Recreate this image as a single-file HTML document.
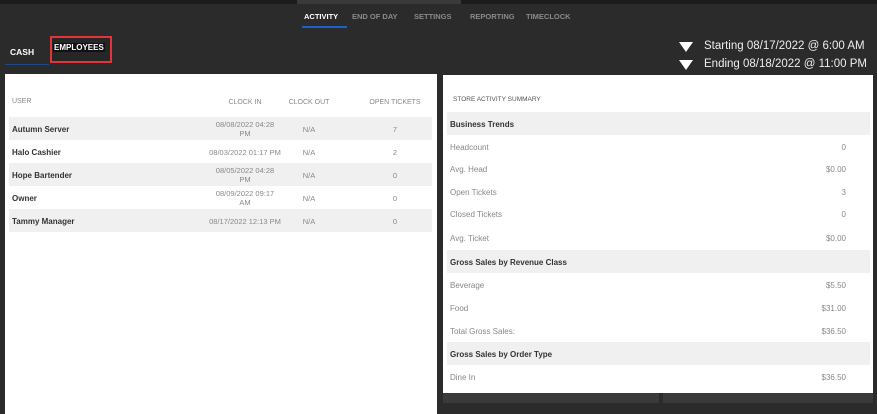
<!DOCTYPE html>
<html><head><style>
*{margin:0;padding:0;box-sizing:border-box}
body{width:877px;height:403px;background:#2b2b2b;font-family:"Liberation Sans",sans-serif;position:relative;overflow:hidden}
.a{position:absolute}
.nav{top:12px;font-size:7.5px;font-weight:bold;color:#8a8a8a;letter-spacing:0}
.lp{left:5px;top:74px;width:432px;height:340px;background:#fff}
.rp{left:443px;top:75px;width:430px;height:318px;background:#fff}
.row{position:absolute;left:0;width:100%;height:23px;font-size:8px;color:#888}
.g{background:#f0f0f0}
.row span{position:absolute;top:8px}
.b{font-weight:bold;color:#333}
.c{text-align:center;width:80px;margin-left:-40px;line-height:9px;font-size:7.5px}
</style></head><body>
<div class="a" style="left:0;top:0;width:877px;height:4px;background:#1c1c1c"></div>
<div class="a" style="left:297px;top:0;width:164px;height:4px;background:#3a3a3a"></div>
<div class="a nav" style="left:304px;color:#fff">ACTIVITY</div>
<div class="a" style="left:302px;top:26px;width:45px;height:2px;background:#1f5fc8"></div>
<div class="a nav" style="left:352px">END OF DAY</div>
<div class="a nav" style="left:414px">SETTINGS</div>
<div class="a nav" style="left:470px">REPORTING</div>
<div class="a nav" style="left:526px">TIMECLOCK</div>
<div class="a" style="left:10px;top:47px;font-size:8.5px;font-weight:bold;color:#fff">CASH</div>
<div class="a" style="left:5px;top:64px;width:44px;height:1px;background:#1f4a8a"></div>
<div class="a" style="left:50px;top:36px;width:62px;height:27px;border:2px solid #e3343c;background:#262626"></div>
<div class="a" style="left:53px;top:43px;font-size:8px;font-weight:bold;color:#fff;background:#111;padding:0 1px">EMPLOYEES</div>
<svg class="a" style="left:679px;top:42px" width="14" height="32"><polygon points="0,0 14,0 7,10" fill="#fff"/><polygon points="0,18 14,18 7,28" fill="#fff"/></svg>
<div class="a" style="left:704px;top:40px;font-size:11.5px;color:#eee">Starting 08/17/2022 @ 6:00 AM</div>
<div class="a" style="left:704px;top:58px;font-size:11.5px;color:#eee">Ending 08/18/2022 @ 11:00 PM</div>

<div class="a lp">
<div class="row" style="top:16px"><span style="left:7px;font-size:7px">USER</span><span class="c" style="left:240px;font-size:7px">CLOCK IN</span><span class="c" style="left:304px;font-size:7px">CLOCK OUT</span><span class="c" style="left:390px;font-size:7px">OPEN TICKETS</span></div>
<div class="row g" style="top:43px;left:4px;width:423px"><span class="b" style="left:3px">Autumn Server</span><span class="c" style="left:236px;top:3px">08/08/2022 04:28<br>PM</span><span class="c" style="left:300px">N/A</span><span class="c" style="left:386px">7</span></div>
<div class="row" style="top:66px;left:4px;width:423px"><span class="b" style="left:3px">Halo Cashier</span><span class="c" style="left:236px">08/03/2022 01:17 PM</span><span class="c" style="left:300px">N/A</span><span class="c" style="left:386px">2</span></div>
<div class="row g" style="top:89px;left:4px;width:423px"><span class="b" style="left:3px">Hope Bartender</span><span class="c" style="left:236px;top:3px">08/05/2022 04:28<br>PM</span><span class="c" style="left:300px">N/A</span><span class="c" style="left:386px">0</span></div>
<div class="row" style="top:112px;left:4px;width:423px"><span class="b" style="left:3px">Owner</span><span class="c" style="left:236px;top:3px">08/09/2022 09:17<br>AM</span><span class="c" style="left:300px">N/A</span><span class="c" style="left:386px">0</span></div>
<div class="row g" style="top:135px;left:4px;width:423px"><span class="b" style="left:3px">Tammy Manager</span><span class="c" style="left:236px">08/17/2022 12:13 PM</span><span class="c" style="left:300px">N/A</span><span class="c" style="left:386px">0</span></div>
</div>

<div class="a" style="left:443px;top:393px;width:216px;height:10px;background:#3a3a3a"></div>
<div class="a" style="left:663px;top:393px;width:210px;height:10px;background:#3a3a3a"></div>
<div class="a rp">
<div class="row" style="top:13px"><span style="left:10px;font-size:6.5px;color:#555">STORE ACTIVITY SUMMARY</span></div>
<div class="row g" style="top:37px;left:4px;width:423px"><span class="b" style="left:3px">Business Trends</span></div>
<div class="row" style="top:60px"><span style="left:7px">Headcount</span><span style="right:27px">0</span></div>
<div class="row" style="top:82px"><span style="left:7px">Avg. Head</span><span style="right:27px">$0.00</span></div>
<div class="row" style="top:105px"><span style="left:7px">Open Tickets</span><span style="right:27px">3</span></div>
<div class="row" style="top:127px"><span style="left:7px">Closed Tickets</span><span style="right:27px">0</span></div>
<div class="row" style="top:151px"><span style="left:7px">Avg. Ticket</span><span style="right:27px">$0.00</span></div>
<div class="row g" style="top:175px;left:4px;width:423px"><span class="b" style="left:3px">Gross Sales by Revenue Class</span></div>
<div class="row" style="top:198px"><span style="left:7px">Beverage</span><span style="right:27px">$5.50</span></div>
<div class="row" style="top:221px"><span style="left:7px">Food</span><span style="right:27px">$31.00</span></div>
<div class="row" style="top:244px"><span style="left:7px">Total Gross Sales:</span><span style="right:27px">$36.50</span></div>
<div class="row g" style="top:267px;left:4px;width:423px"><span class="b" style="left:3px">Gross Sales by Order Type</span></div>
<div class="row" style="top:290px"><span style="left:7px">Dine In</span><span style="right:27px">$36.50</span></div>
</div>
</body></html>
